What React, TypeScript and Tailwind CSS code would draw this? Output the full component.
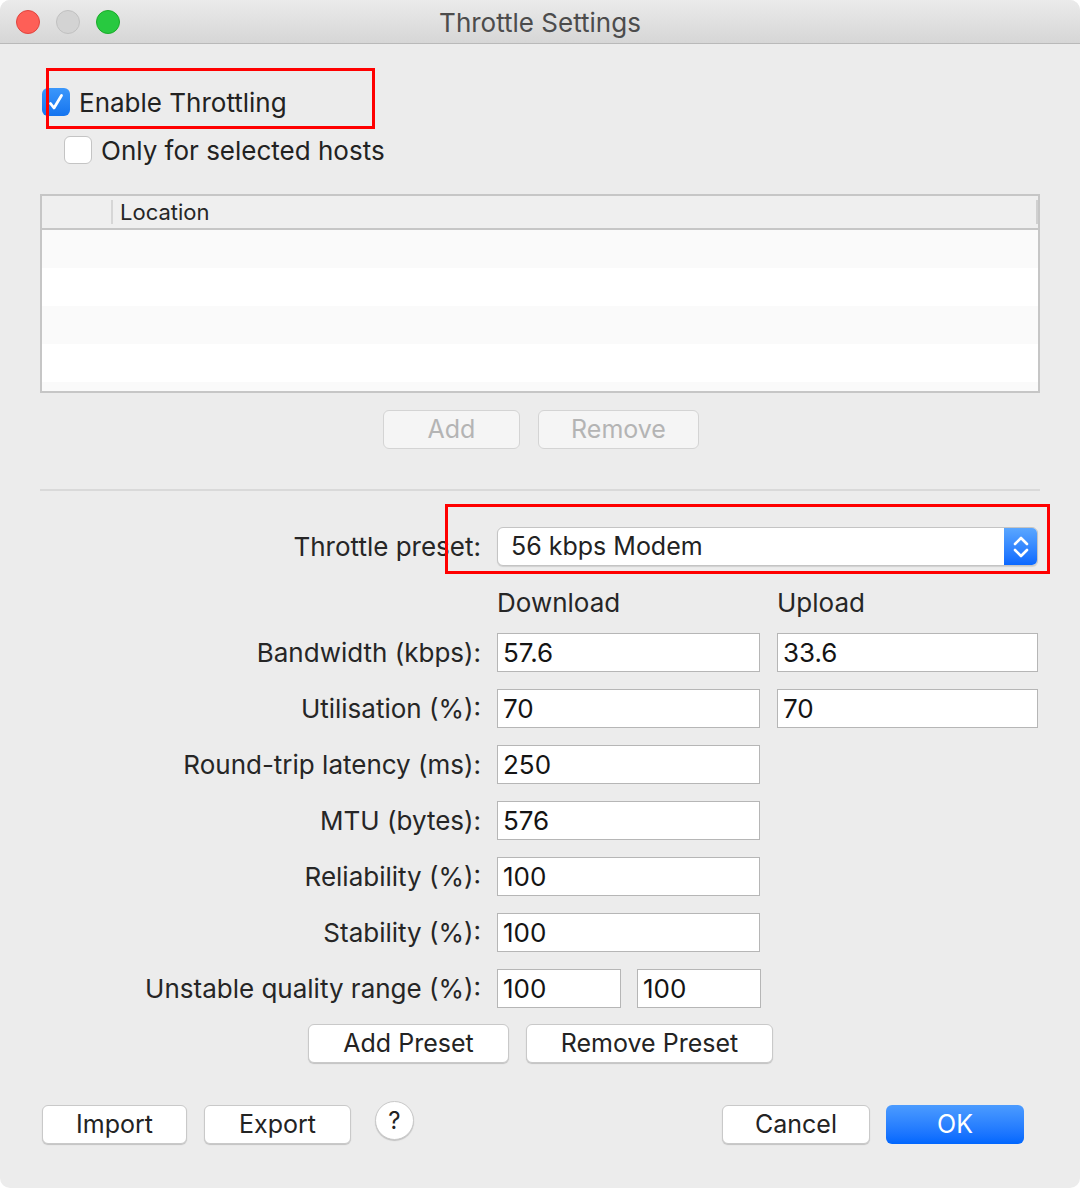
import React from 'react'

const font = { fontFamily: 'Inter, "Open Sans", "Liberation Sans", sans-serif' }

function MacButton({ label, width, disabled }: { label: string; width: string; disabled?: boolean }) {
  return (
    <div
      className={`${width} h-[39px] flex items-center justify-center rounded-[6px] border text-[25px] leading-none ${
        disabled
          ? 'bg-[#f5f5f5] border-[#d4d4d4] text-[#b4b4b4]'
          : 'bg-white border-[#c9c9c9] text-[#232323] shadow-[0_1px_1px_rgba(0,0,0,0.18)]'
      }`}
    >
      {label}
    </div>
  )
}

function Field({ value, width = 'w-full' }: { value: string; width?: string }) {
  return (
    <div className={`${width} h-[39px] bg-white border border-[#b6b6b6] flex items-center pl-[5px] text-[26px] text-[#141414]`}>
      {value}
    </div>
  )
}

function Label({ text }: { text: string }) {
  return <div className="text-right text-[26px] text-[#262626] self-center">{text}</div>
}

export default function App() {
  return (
    <div className="w-[1080px] h-[1188px] bg-white" style={font}>
      <div className="relative w-[1080px] h-[1188px] bg-[#ececec] rounded-[10px] overflow-hidden flex flex-col">
        {/* Title bar */}
        <div className="h-[44px] shrink-0 bg-gradient-to-b from-[#ebebeb] to-[#d6d6d6] border-b border-[#b9b9b9] flex items-center relative">
          <div className="flex gap-[16px] pl-[16px]">
            <span className="w-[24px] h-[24px] rounded-full bg-[#fe5f57] border border-[#e0443e]" />
            <span className="w-[24px] h-[24px] rounded-full bg-[#d3d3d3] border border-[#c0c0c0]" />
            <span className="w-[24px] h-[24px] rounded-full bg-[#28c940] border border-[#1aab29]" />
          </div>
          <div className="absolute inset-0 flex items-center justify-center pt-[2px] text-[26px] text-[#4c4c4c]">Throttle Settings</div>
        </div>

        <div className="px-[40px] flex flex-col">
          {/* Checkboxes */}
          <div className="mt-[44px] flex items-center h-[28px] pl-[2px]">
            <span className="w-[28px] h-[28px] rounded-[6px] bg-gradient-to-b from-[#3b97fb] to-[#1474ef] flex items-center justify-center">
              <svg width="20" height="20" viewBox="0 0 20 20">
                <path d="M4.5 11.5 L8 16 L15.5 3.5" fill="none" stroke="white" strokeWidth="2.8" strokeLinecap="round" strokeLinejoin="round" />
              </svg>
            </span>
            <span className="ml-[9px] text-[26px] text-[#222]">Enable Throttling</span>
          </div>
          <div className="mt-[20px] flex items-center h-[28px] pl-[24px]">
            <span className="w-[28px] h-[28px] rounded-[6px] bg-white border border-[#c4c4c4]" />
            <span className="ml-[9px] text-[26px] text-[#222]">Only for selected hosts</span>
          </div>

          {/* Table */}
          <div className="mt-[30px] h-[199px] border-2 border-[#c6c6c6] bg-[#fafafa] flex flex-col">
            <div className="h-[34px] shrink-0 bg-[#efefef] border-b-2 border-[#c6c6c6] flex items-center">
              <div className="w-[71px] h-[24px] border-r-2 border-[#d6d6d6]" />
              <div className="pl-[7px] flex-1 text-[22px] text-[#262626]">Location</div>
              <div className="w-[2px] h-[24px] bg-[#d0d0d0]" />
            </div>
            <div className="h-[38px] bg-[#fafafa]" />
            <div className="h-[38px] bg-[#ffffff]" />
            <div className="h-[38px] bg-[#fafafa]" />
            <div className="h-[38px] bg-[#ffffff]" />
            <div className="flex-1 bg-[#fafafa]" />
          </div>

          <div className="mt-[17px] flex justify-center gap-[18px] pl-[2px]">
            <MacButton label="Add" width="w-[137px]" disabled />
            <MacButton label="Remove" width="w-[161px]" disabled />
          </div>

          <div className="mt-[40px] h-[2px] bg-[#d9d9d9]" />

          {/* Form */}
          <div className="mt-[36px] grid grid-cols-[441px_264px_261px] gap-x-[16px]">
            <Label text="Throttle preset:" />
            <div className="col-span-2 h-[39px] bg-white border border-[#c4c4c4] rounded-[6px] flex items-center overflow-hidden shadow-[0_1px_1px_rgba(0,0,0,0.12)]">
              <span className="flex-1 pl-[13px] text-[25px] text-[#222]">56 kbps Modem</span>
              <span className="w-[33px] h-full bg-gradient-to-b from-[#5aa6ff] to-[#0a68ff] flex items-center justify-center">
                <svg width="20" height="32" viewBox="0 0 20 32">
                  <path d="M4 13 L10 7 L16 13" fill="none" stroke="white" strokeWidth="2.6" strokeLinecap="round" strokeLinejoin="round" />
                  <path d="M4 19 L10 25 L16 19" fill="none" stroke="white" strokeWidth="2.6" strokeLinecap="round" strokeLinejoin="round" />
                </svg>
              </span>
            </div>
          </div>
          <div className="grid grid-cols-[441px_264px_261px] gap-x-[16px] mt-[17px]">
            <div />
            <div className="text-[26px] text-[#262626]">Download</div>
            <div className="text-[26px] text-[#262626]">Upload</div>
          </div>
          <div className="mt-[11px] grid grid-cols-[441px_264px_261px] gap-x-[16px] gap-y-[17px]">
            <Label text="Bandwidth (kbps):" />
            <Field value="57.6" width="w-[263px]" />
            <Field value="33.6" />
            <Label text="Utilisation (%):" />
            <Field value="70" width="w-[263px]" />
            <Field value="70" />
            <Label text="Round-trip latency (ms):" />
            <Field value="250" width="w-[263px]" />
            <div />
            <Label text="MTU (bytes):" />
            <Field value="576" width="w-[263px]" />
            <div />
            <Label text="Reliability (%):" />
            <Field value="100" width="w-[263px]" />
            <div />
            <Label text="Stability (%):" />
            <Field value="100" width="w-[263px]" />
            <div />
            <Label text="Unstable quality range (%):" />
            <div className="flex gap-[16px]">
              <Field value="100" width="w-[124px]" />
              <Field value="100" width="w-[124px]" />
            </div>
            <div />
          </div>

          <div className="mt-[16px] flex gap-[17px] pl-[268px]">
            <MacButton label="Add Preset" width="w-[201px]" />
            <MacButton label="Remove Preset" width="w-[247px]" />
          </div>

          {/* Bottom */}
          <div className="mt-[42px] flex items-center pl-[2px] pr-[16px]">
            <MacButton label="Import" width="w-[145px]" />
            <div className="ml-[17px]">
              <MacButton label="Export" width="w-[147px]" />
            </div>
            <div className="ml-[24px] -mt-[8px] w-[39px] h-[39px] rounded-full bg-white border border-[#c9c9c9] shadow-[0_1px_1px_rgba(0,0,0,0.18)] flex items-center justify-center text-[24px] text-[#232323]">
              ?
            </div>
            <div className="flex-1" />
            <MacButton label="Cancel" width="w-[148px]" />
            <div className="ml-[16px] w-[138px] h-[39px] rounded-[6px] bg-gradient-to-b from-[#4b9bff] to-[#0066fe] flex items-center justify-center text-[25px] text-white">
              OK
            </div>
          </div>
        </div>

        {/* Annotation rectangles */}
        <div className="absolute left-[46px] top-[68px] w-[329px] h-[61px] border-[3px] border-[#ff0000]" />
        <div className="absolute left-[445px] top-[504px] w-[605px] h-[70px] border-[3px] border-[#ff0000]" />
      </div>
    </div>
  )
}
